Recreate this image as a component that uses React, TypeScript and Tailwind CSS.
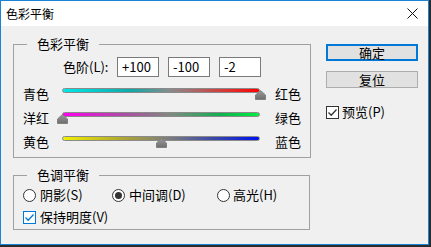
import React from 'react';

const Thumb = () => (
  <svg width="11" height="10" viewBox="0 0 11 10" className="block">
    <defs>
      <linearGradient id="tg" x1="0" y1="0" x2="0" y2="1">
        <stop offset="0" stopColor="#9a9a9a" />
        <stop offset="1" stopColor="#6e6e6e" />
      </linearGradient>
    </defs>
    <path d="M5.5 0.5 L10.5 5 V9.5 H0.5 V5 Z" fill="url(#tg)" stroke="#808080" strokeWidth="1" />
  </svg>
);

const Slider = ({ left, right, gradient, pos }: { left: string; right: string; gradient: string; pos: number }) => (
  <div className="flex items-center h-[16px] whitespace-nowrap">
    <span className="w-[39px] leading-[16px]">{left}</span>
    <div className="relative w-[198px] h-[16px] pt-[2px]">
      <div className={`h-[5px] rounded-full border border-[#8a8a8a] ${gradient}`} />
      <div className="absolute top-[4px] -ml-[5.5px]" style={{ left: `${pos}%` }}>
        <Thumb />
      </div>
    </div>
    <span className="ml-[15px] leading-[16px]">{right}</span>
  </div>
);

const Radio = ({ checked }: { checked?: boolean }) => (
  <svg width="13" height="13" viewBox="0 0 13 13" className="block shrink-0">
    <circle cx="6.5" cy="6.5" r="6" fill="#fff" stroke="#333" strokeWidth="1" />
    {checked && <circle cx="6.5" cy="6.5" r="3.5" fill="#333" />}
  </svg>
);

const Check = ({ blue }: { blue?: boolean }) => (
  <svg width="13" height="13" viewBox="0 0 13 13" className="block shrink-0">
    <rect x="0.5" y="0.5" width="12" height="12" fill="#fff" stroke={blue ? '#0078d7' : '#333'} strokeWidth="1" />
    <path d="M2.5 6.5 L5.2 9.2 L10.5 3.5" fill="none" stroke={blue ? '#0078d7' : '#333'} strokeWidth="1.3" />
  </svg>
);

export default function App() {
  return (
    <div className="w-[431px] h-[247px] bg-[#2b2b2b] font-['Noto_Sans_CJK_SC',sans-serif] text-[13px] text-black">
      <div className="w-[429px] h-[245px] border border-[#1883d7] bg-[#f0f0f0] flex flex-col">
        {/* title bar */}
        <div className="h-[25px] bg-white flex items-center justify-between pl-[5px] pr-[10px] shrink-0">
          <span className="text-[12px] leading-[16px]">色彩平衡</span>
          <svg width="11" height="11" viewBox="0 0 11 11">
            <path d="M0.5 0.5 L10.5 10.5 M10.5 0.5 L0.5 10.5" stroke="#111" strokeWidth="1" />
          </svg>
        </div>

        <div className="flex flex-1">
          {/* left column */}
          <div className="pl-[12px] pt-[10px] w-[309px] shrink-0">
            <fieldset className="border border-[#a0a0a0] w-[297px] px-[9px] pb-[7px]">
              <legend className="ml-[4px] px-[10px] leading-[16px]">色彩平衡</legend>
              <div className="flex items-center pt-[5px] h-[25px] whitespace-nowrap">
                <span className="ml-[40px] w-[54px] leading-[16px]">色阶(L):</span>
                <div className="flex gap-[9px]">
                  {['+100', '-100', '-2'].map((v) => (
                    <div key={v} className="w-[42px] h-[20px] border border-[#7a7a7a] bg-white pl-[4px] leading-[18px]">
                      {v}
                    </div>
                  ))}
                </div>
              </div>
              <div className="flex flex-col gap-[8px] mt-[9px]">
                <Slider left="青色" right="红色" pos={100} gradient="bg-[linear-gradient(to_right,#00e8e8,#11a8a8_35%,#8a8a8a_55%,#e03030_85%,#ff0000)]" />
                <Slider left="洋红" right="绿色" pos={0} gradient="bg-[linear-gradient(to_right,#ff00f0,#b04aa8_30%,#7f8a7f_55%,#10b050_80%,#00f040)]" />
                <Slider left="黄色" right="蓝色" pos={50} gradient="bg-[linear-gradient(to_right,#f0f000,#b0a830_30%,#7a7a80_55%,#3040b0_80%,#0010f0)]" />
              </div>
            </fieldset>

            <fieldset className="border border-[#a0a0a0] w-[297px] mt-[9px] px-[9px] pb-[4px]">
              <legend className="ml-[4px] px-[10px] leading-[16px]">色调平衡</legend>
              <div className="flex items-center h-[16px] mt-[4px] whitespace-nowrap">
                <div className="flex items-center w-[89px] gap-[4px]">
                  <Radio />
                  <span className="leading-[16px]">阴影(S)</span>
                </div>
                <div className="flex items-center w-[105px] gap-[4px]">
                  <Radio checked />
                  <span className="leading-[16px]">中间调(D)</span>
                </div>
                <div className="flex items-center gap-[3px]">
                  <Radio />
                  <span className="leading-[16px]">高光(H)</span>
                </div>
              </div>
              <div className="flex items-center h-[16px] mt-[6px] gap-[4px] whitespace-nowrap">
                <Check blue />
                <span className="leading-[16px]">保持明度(V)</span>
              </div>
            </fieldset>
          </div>

          {/* right column */}
          <div className="pl-[16px] pt-[18px] flex flex-col">
            <button className="w-[92px] h-[17px] border-2 border-[#0078d7] bg-[#e1e1e1] flex items-center justify-center leading-[13px]">
              确定
            </button>
            <button className="w-[92px] h-[17px] mt-[10px] border border-[#adadad] bg-[#e1e1e1] flex items-center justify-center leading-[13px]">
              复位
            </button>
            <div className="flex items-center h-[16px] mt-[16px] gap-[3px] whitespace-nowrap">
              <Check />
              <span className="leading-[16px]">预览(P)</span>
            </div>
          </div>
        </div>
      </div>
    </div>
  );
}
